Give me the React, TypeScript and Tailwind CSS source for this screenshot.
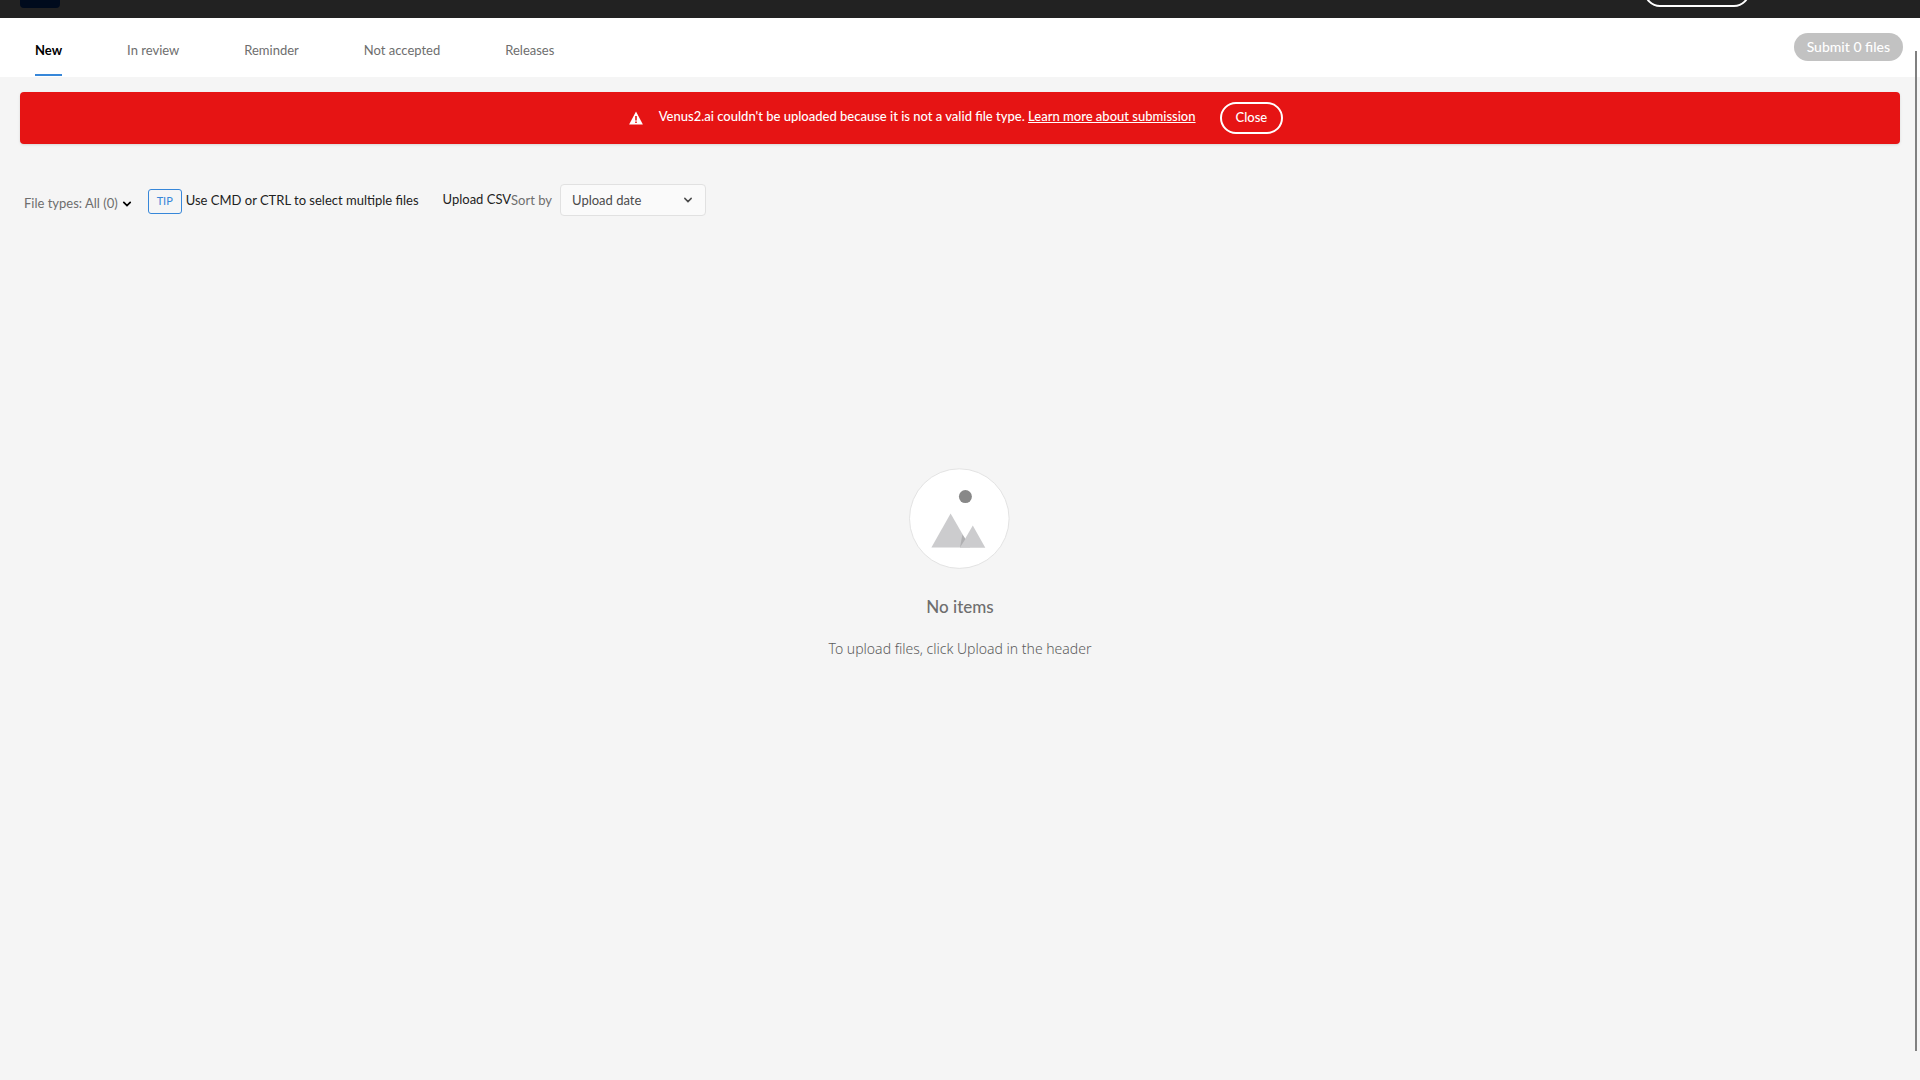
import { useState } from "react";

const TABS = ["New", "In review", "Reminder", "Not accepted", "Releases"];

function WarningIcon() {
    return (
        <svg width="14" height="14" viewBox="0 0 14 14" aria-hidden="true">
            <path d="M7 0.4 13.9 13.6H0.1Z" fill="#fff" />
            <path d="M6.2 5h1.6v4.4H6.2ZM6.2 10.4h1.6v1.6H6.2Z" fill="#e61414" />
        </svg>
    );
}

function Chevron({ strokeWidth }: { strokeWidth: number }) {
    return (
        <svg
            width="10"
            height="10"
            viewBox="0 0 10 10"
            fill="none"
            stroke="currentColor"
            strokeWidth={strokeWidth}
            aria-hidden="true"
        >
            <path d="M1.8 3.4 5 6.6 8.2 3.4" strokeLinecap="round" />
        </svg>
    );
}

function EmptyIllustration() {
    return (
        <svg width="102" height="102" viewBox="0 0 102 102" aria-hidden="true">
            <circle cx="50.3" cy="50.6" r="49.8" fill="#fff" stroke="#e3e3e3" />
            <circle cx="56.4" cy="28.6" r="6.5" fill="#888" />
            <path d="M41.6 45.5 61.2 79.5H22.4Z" fill="#ccccce" />
            <path d="M63.8 57.5 76.3 79.8H50.9Z" fill="#ccccce" />
            {/* shadow where the two mountains cross */}
            <path d="M53.4 66.4 56.4 71 51 79.5Z" fill="#b0b0b2" />
        </svg>
    );
}

export default function App() {
    const [activeTab, setActiveTab] = useState("New");
    const [showError, setShowError] = useState(true);

    return (
        <div className="relative flex min-h-screen flex-col bg-[#f5f5f5] font-[Lato,sans-serif] text-[13px] text-[#6e6e6e]">
            {/* Top bar */}
            <header className="flex h-[18px] items-end overflow-hidden bg-[#222] px-5">
                <div className="mb-2.5 h-10 w-10 rounded bg-[#000b1d]" />
                <button
                    type="button"
                    aria-label="Upload"
                    className="mr-[150px] mb-[11px] ml-auto h-8 w-[106px] rounded-full border-2 border-white"
                />
            </header>

            {/* Tabs */}
            <div className="flex h-[59px] items-center justify-between bg-white pr-[17px] pl-[35px]">
                <nav className="flex h-full gap-[65px] pb-px">
                    {TABS.map((tab) => (
                        <button
                            key={tab}
                            type="button"
                            onClick={() => setActiveTab(tab)}
                            className={`border-b-2 pt-2.5 ${activeTab === tab
                                ? "border-[#3787d9] font-bold text-black"
                                : "border-transparent"
                            }`}
                        >
                            {tab}
                        </button>
                    ))}
                </nav>
                <button
                    type="button"
                    disabled
                    className="mb-0.5 h-7 rounded-full bg-[#c2c2c2] px-[13px] text-sm font-medium text-white"
                >
                    Submit 0 files
                </button>
            </div>

            <main className="flex flex-col px-5 pt-[15px]">
                {showError && (
                    <div
                        role="alert"
                        className="flex h-[52px] items-center justify-center rounded bg-[#e61414] pr-2 font-medium text-white shadow-sm"
                    >
                        <WarningIcon />
                        <p className="mr-6 mb-0.5 ml-4">
                            Venus2.ai couldn't be uploaded because it is not a valid file type.{" "}
                            <a href="#" className="underline">Learn more about submission</a>
                        </p>
                        <button
                            type="button"
                            onClick={() => setShowError(false)}
                            className="h-8 rounded-full border-2 border-white px-[14px]"
                        >
                            Close
                        </button>
                    </div>
                )}

                {/* Filters */}
                <div className="mt-10 flex h-8 items-center pl-1">
                    <button type="button" className="flex items-center gap-1 pt-2">
                        File types: All (0)
                        <span className="text-black"><Chevron strokeWidth={1.8} /></span>
                    </button>
                    <span className="mt-0.5 ml-4 flex h-[25px] w-[34px] items-center justify-center rounded-[3px] border border-[#3787d9] text-[11px] text-[#3787d9]">
                        TIP
                    </span>
                    <span className="mt-0.5 ml-1 text-[#222]">Use CMD or CTRL to select multiple files</span>
                    <button type="button" className="ml-6 text-[#222]">Upload CSV</button>
                    <label htmlFor="sort" className="mt-0.5">Sort by</label>
                    <div className="relative ml-2 text-[#4b4b4b]">
                        <select
                            id="sort"
                            className="h-8 w-[146px] appearance-none rounded border border-[#e1e1e1] bg-[#fafafa] pt-0.5 pl-[11px]"
                        >
                            <option>Upload date</option>
                        </select>
                        <span className="pointer-events-none absolute top-[11px] right-[13px]">
                            <Chevron strokeWidth={1.5} />
                        </span>
                    </div>
                </div>

                {/* Empty state */}
                <div className="mt-[252px] flex flex-col items-center">
                    <EmptyIllustration />
                    <h2 className="mt-[25px] text-[17px] leading-6 font-medium">No items</h2>
                    <p className="mt-[18px] font-['Noto_Sans',sans-serif] text-sm leading-6 font-light text-[#5c5c5c]">
                        To upload files, click Upload in the header
                    </p>
                </div>
            </main>

            {/* Scroll thumb */}
            <div className="absolute top-[51px] right-[3px] bottom-[29px] w-0.5 bg-[#808080]" />
        </div>
    );
}
